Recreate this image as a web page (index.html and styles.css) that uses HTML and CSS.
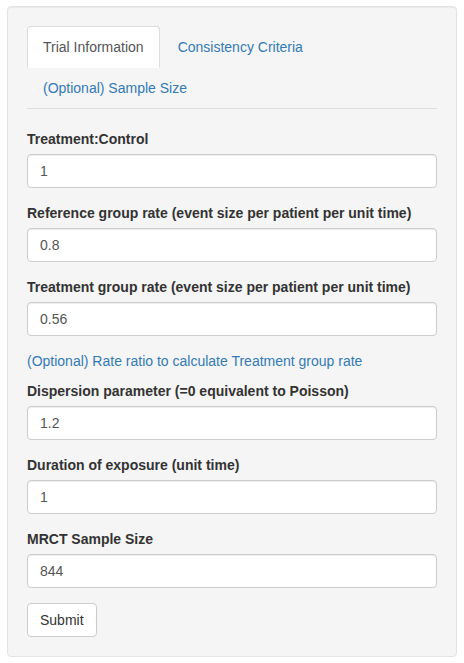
FILE: index.html
```html
<!DOCTYPE html>
<html>
<head>
<meta charset="utf-8">
<link rel="stylesheet" href="styles.css">
</head>
<body>
<div class="well">
  <ul class="nav-tabs">
    <li class="active"><a>Trial Information</a></li>
    <li><a>Consistency Criteria</a></li>
    <li><a>(Optional) Sample Size</a></li>
  </ul>
  <div class="tab-content">
    <div class="form-group">
      <label>Treatment:Control</label>
      <input class="form-control" value="1">
    </div>
    <div class="form-group">
      <label>Reference group rate (event size per patient per unit time)</label>
      <input class="form-control" value="0.8">
    </div>
    <div class="form-group">
      <label>Treatment group rate (event size per patient per unit time)</label>
      <input class="form-control" value="0.56">
    </div>
    <div class="link-row"><a class="action-link">(Optional) Rate ratio to calculate Treatment group rate</a></div>
    <div class="form-group">
      <label>Dispersion parameter (=0 equivalent to Poisson)</label>
      <input class="form-control" value="1.2">
    </div>
    <div class="form-group">
      <label>Duration of exposure (unit time)</label>
      <input class="form-control" value="1">
    </div>
    <div class="form-group">
      <label>MRCT Sample Size</label>
      <input class="form-control" value="844">
    </div>
    <button class="btn">Submit</button>
  </div>
</div>
</body>
</html>
```

FILE: styles.css
```css
* { box-sizing: border-box; }
html, body { margin: 0; padding: 0; }
body {
  font-family: "Liberation Sans", Arial, sans-serif;
  font-size: 14px;
  line-height: 20px;
  color: #333;
  background: #fff;
  padding: 6px 7px 0 7px;
}
.well {
  width: 450px;
  background: #f5f5f5;
  border: 1px solid #e3e3e3;
  border-radius: 4px;
  padding: 19px;
  box-shadow: inset 0 1px 1px rgba(0,0,0,0.05);
}
.nav-tabs {
  list-style: none;
  margin: 0;
  padding: 0;
  border-bottom: 1px solid #ddd;
  display: flex;
  flex-wrap: wrap;
}
.nav-tabs li {
  margin-bottom: -1px;
}
.nav-tabs a {
  display: block;
  padding: 10px 15px;
  border: 1px solid transparent;
  border-radius: 4px 4px 0 0;
  margin-right: 2px;
  color: #337ab7;
  text-decoration: none;
  line-height: 20px;
}
.nav-tabs li.active a {
  color: #555;
  background: #fff;
  border-color: #ddd #ddd transparent #ddd;
}
.tab-content { padding-top: 20px; }
.form-group { margin-bottom: 15px; }
label {
  display: block;
  font-weight: bold;
  margin-bottom: 5px;
}
.form-control {
  display: block;
  width: 100%;
  height: 34px;
  padding: 6px 12px;
  font-family: inherit;
  font-size: 14px;
  line-height: 20px;
  color: #555;
  background: #fff;
  border: 1px solid #ccc;
  border-radius: 4px;
  box-shadow: inset 0 1px 1px rgba(0,0,0,0.075);
}
.link-row { margin-bottom: 10px; }
.action-link { color: #337ab7; text-decoration: none; }
.btn {
  display: block;
  padding: 6px 12px;
  font-family: inherit;
  font-size: 14px;
  line-height: 20px;
  color: #333;
  background: #fff;
  border: 1px solid #ccc;
  border-radius: 4px;
  height: 34px;
}
```
